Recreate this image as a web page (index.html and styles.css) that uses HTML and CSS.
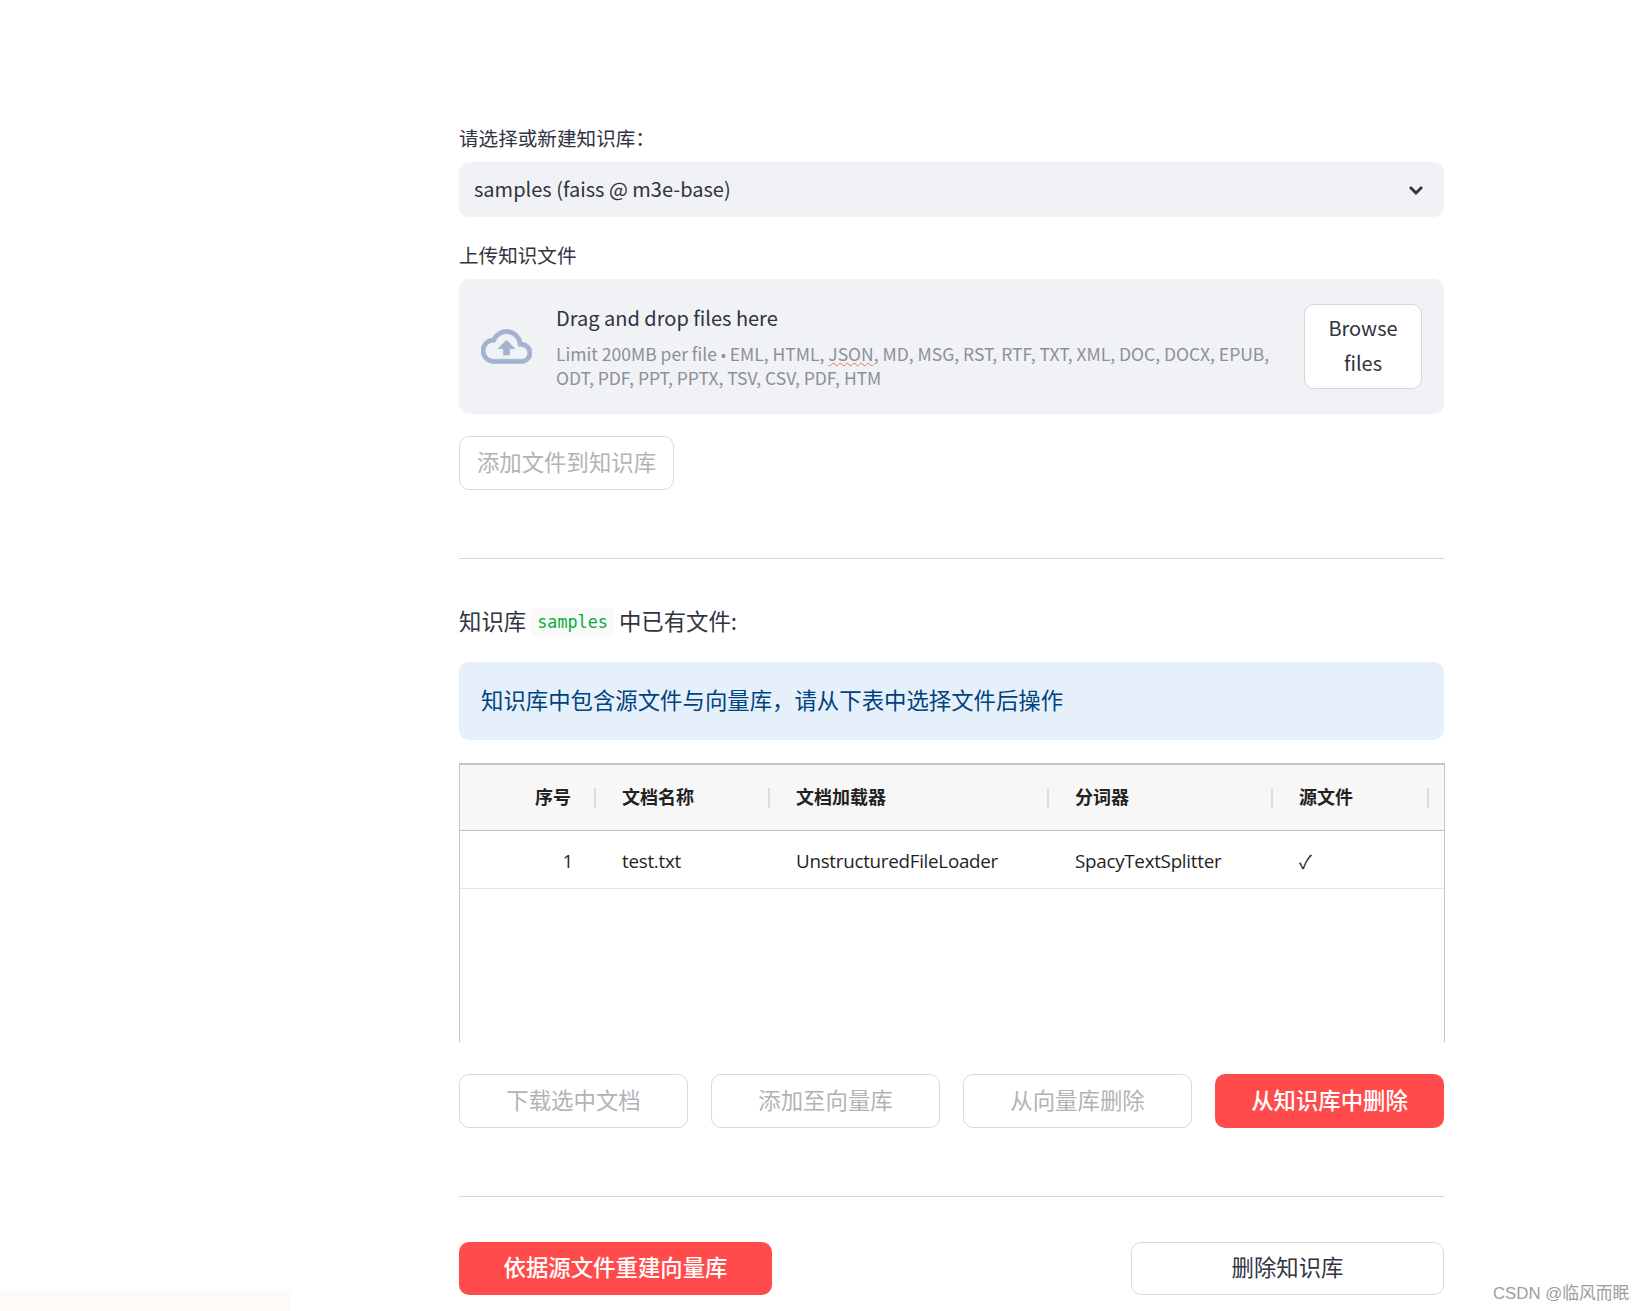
FILE: index.html
```html
<!DOCTYPE html>
<html lang="zh-CN">
<head>
    <meta charset="UTF-8">
    <title>知识库管理</title>
    <link rel="stylesheet" href="styles.css">
</head>
<body>

    <main class="page">
        <label class="field-label">请选择或新建知识库：</label>
        <div class="select-box">
            <span class="select-value">samples (faiss @ m3e-base)</span>
            <svg class="chevron" viewBox="0 0 16 10" width="16" height="10"><path d="M2 2l6 6 6-6" fill="none" stroke="#31333f" stroke-width="2.8"/></svg>
        </div>

        <label class="field-label upload-label">上传知识文件</label>
        <div class="uploader">
            <svg class="cloud" viewBox="0 0 24 24" width="51" height="51"><path fill="#a3b2ce" stroke="#a3b2ce" stroke-width="0.3" d="M19.35 10.04C18.67 6.59 15.64 4 12 4 9.11 4 6.6 5.64 5.35 8.04 2.34 8.36 0 10.91 0 14c0 3.31 2.69 6 6 6h13c2.76 0 5-2.24 5-5 0-2.64-2.05-4.78-4.65-4.96zM19 18H6c-2.21 0-4-1.79-4-4 0-2.05 1.53-3.76 3.56-3.97l1.07-.11.5-.95C8.08 7.14 9.94 6 12 6c2.62 0 4.88 1.86 5.39 4.43l.3 1.5 1.53.11c1.56.1 2.78 1.41 2.78 2.96 0 1.65-1.35 3-3 3zM8 13h2.55v3h2.9v-3H16l-4-4z"/></svg>
            <div class="upload-text">
                <div class="upload-title">Drag and drop files here</div>
                <div class="upload-limit">Limit 200MB per file <span class="dot">•</span> EML, HTML, <span class="spell">JSON</span>, MD, MSG, RST, RTF, TXT, XML, DOC, DOCX, EPUB, ODT, PDF, PPT, PPTX, TSV, CSV, PDF, HTM</div>
            </div>
            <button class="browse">Browse files</button>
        </div>

        <button class="btn btn-disabled add-btn">添加文件到知识库</button>

        <hr class="divider first-divider">

        <h3 class="files-title">知识库 <code>samples</code> 中已有文件:</h3>

        <div class="alert">知识库中包含源文件与向量库，请从下表中选择文件后操作</div>

        <div class="table">
            <div class="table-row table-head">
                <div class="head-cell num"><span>序号</span></div>
                <div class="head-cell"><span>文档名称</span></div>
                <div class="head-cell"><span>文档加载器</span></div>
                <div class="head-cell"><span>分词器</span></div>
                <div class="head-cell"><span>源文件</span></div>
            </div>
            <div class="table-row table-body">
                <div class="cell num">1</div>
                <div class="cell">test.txt</div>
                <div class="cell">UnstructuredFileLoader</div>
                <div class="cell">SpacyTextSplitter</div>
                <div class="cell">✓</div>
            </div>
        </div>

        <div class="action-row">
            <button class="btn btn-disabled">下载选中文档</button>
            <button class="btn btn-disabled">添加至向量库</button>
            <button class="btn btn-disabled">从向量库删除</button>
            <button class="btn btn-primary">从知识库中删除</button>
        </div>

        <hr class="divider second-divider">

        <div class="footer-row">
            <button class="btn btn-primary">依据源文件重建向量库</button>
            <button class="btn btn-plain">删除知识库</button>
        </div>
    </main>

    <div class="corner-patch"></div>
    <div class="watermark">CSDN @临风而眠</div>

</body>
</html>
```

FILE: styles.css
```css
* {
    margin: 0;
    padding: 0;
    box-sizing: border-box;
}

html, body {
    height: 1311px;
    overflow: hidden;
}

body {
    font-family: "Noto Sans CJK SC", "Noto Sans", sans-serif;
    background-color: #fff;
    color: #31333f;
}

.page {
    width: 985px;
    margin-left: 459px;
    padding-top: 124px;
}

.field-label {
    display: block;
    height: 28px;
    font-size: 19.6px;
    line-height: 28px;
    margin-bottom: 10px;
}

.select-box {
    display: flex;
    justify-content: space-between;
    align-items: center;
    height: 55px;
    padding: 0 20px 0 15px;
    background-color: #f0f2f6;
    border-radius: 10px;
    font-size: 20px;
}

.select-value {
    padding-bottom: 3px;
}

.upload-label {
    margin-top: 25px;
    margin-bottom: 9px;
    line-height: 26px;
}

.uploader {
    display: flex;
    align-items: center;
    height: 135px;
    padding: 0 22px;
    background-color: #f0f2f6;
    border-radius: 10px;
}

.cloud {
    flex: none;
    margin-right: 24px;
}

.upload-text {
    flex: 1;
    padding-right: 10px;
}

.upload-title {
    font-size: 20px;
    line-height: 30px;
    margin-bottom: 9px;
}

.upload-limit {
    font-size: 17.5px;
    line-height: 24px;
    color: #8c9098;
}

.dot {
    font-family: "Liberation Sans", sans-serif;
    font-size: 14px;
    line-height: 0;
}

.spell {
    text-decoration: underline wavy #f0705a 1px;
}

.browse {
    flex: none;
    width: 118px;
    height: 85px;
    padding: 0 20px 2px;
    background-color: #fff;
    border: 1px solid #d5d6da;
    border-radius: 10px;
    color: #31333f;
    font-family: inherit;
    font-size: 20px;
    line-height: 34.5px;
}

.btn {
    height: 54px;
    padding-bottom: 4px;
    border-radius: 10px;
    font-family: inherit;
    font-size: 22.4px;
    background-color: #fff;
}

.btn-disabled {
    border: 1px solid #d9d9dc;
    color: #b2b3b6;
}

.btn-primary {
    border: none;
    background-color: #ff4b4b;
    color: #fff;
    font-weight: 500;
}

.btn-plain {
    border: 1px solid #d9d9dc;
    color: #31333f;
}

.add-btn {
    display: block;
    width: 215px;
    margin-top: 22px;
}

.divider {
    border: none;
    border-top: 1px solid #d6d6d9;
}

.first-divider {
    margin-top: 68px;
}

.files-title {
    display: flex;
    align-items: center;
    gap: 5px;
    height: 32px;
    margin-top: 45px;
    font-size: 22.4px;
    font-weight: 400;
}

.files-title code {
    margin-top: 4px;
    padding: 3px 6px;
    background-color: #fafafa;
    border-radius: 5px;
    color: #09ab3b;
    font-family: "DejaVu Sans Mono", monospace;
    font-size: 16.8px;
    line-height: 23px;
}

.alert {
    display: flex;
    align-items: center;
    height: 78px;
    margin-top: 26px;
    padding-left: 22px;
    padding-bottom: 4px;
    background-color: #e6f0fa;
    border-radius: 10px;
    color: #004280;
    font-size: 22.4px;
}

.table {
    height: 279px;
    margin-top: 23px;
    margin-right: -1px;
    border: 1px solid #c4c4c6;
    border-bottom: none;
    border-top-width: 2px;
    font-family: "Open Sans", "Noto Sans CJK SC", sans-serif;
}

.table-row {
    display: grid;
    grid-template-columns: 136px 174px 279px 224px 156px 1fr;
}

.table-head {
    height: 66px;
    background-color: #f7f7f7;
    border-bottom: 1px solid #c0c0c2;
}

.head-cell {
    display: flex;
    align-items: center;
}

.head-cell span {
    flex: 1;
    height: 20px;
    padding-left: 26px;
    border-right: 2px solid #dcdcdc;
    color: #222;
    font-family: "Noto Sans CJK SC", sans-serif;
    font-size: 18px;
    font-weight: 700;
    line-height: 16px;
}

.head-cell.num span {
    padding-left: 0;
    padding-right: 23px;
    text-align: right;
}

.table-body {
    height: 58px;
    align-items: center;
    border-bottom: 1px solid #e1e4ea;
}

.cell {
    padding-left: 26px;
    padding-top: 2px;
    color: #1f1f1f;
    font-size: 18.8px;
    letter-spacing: -0.27px;
}

.cell.num {
    padding-left: 0;
    padding-right: 23px;
    text-align: right;
}

.action-row {
    display: grid;
    grid-template-columns: repeat(4, 1fr);
    gap: 23px;
    margin-top: 32px;
}

.second-divider {
    margin-top: 68px;
}

.footer-row {
    display: flex;
    justify-content: space-between;
    margin-top: 45px;
}

.footer-row .btn {
    width: 313px;
    height: 53px;
    padding-bottom: 5px;
}

.corner-patch {
    position: absolute;
    left: 0;
    top: 1290px;
    width: 290px;
    height: 21px;
    background-color: #fffaf7;
}

.watermark {
    position: absolute;
    left: 1493px;
    top: 1282px;
    color: #9d9d9d;
    font-size: 16.8px;
    line-height: 24px;
    font-family: "Liberation Sans", "Noto Sans CJK SC", sans-serif;
}
```
